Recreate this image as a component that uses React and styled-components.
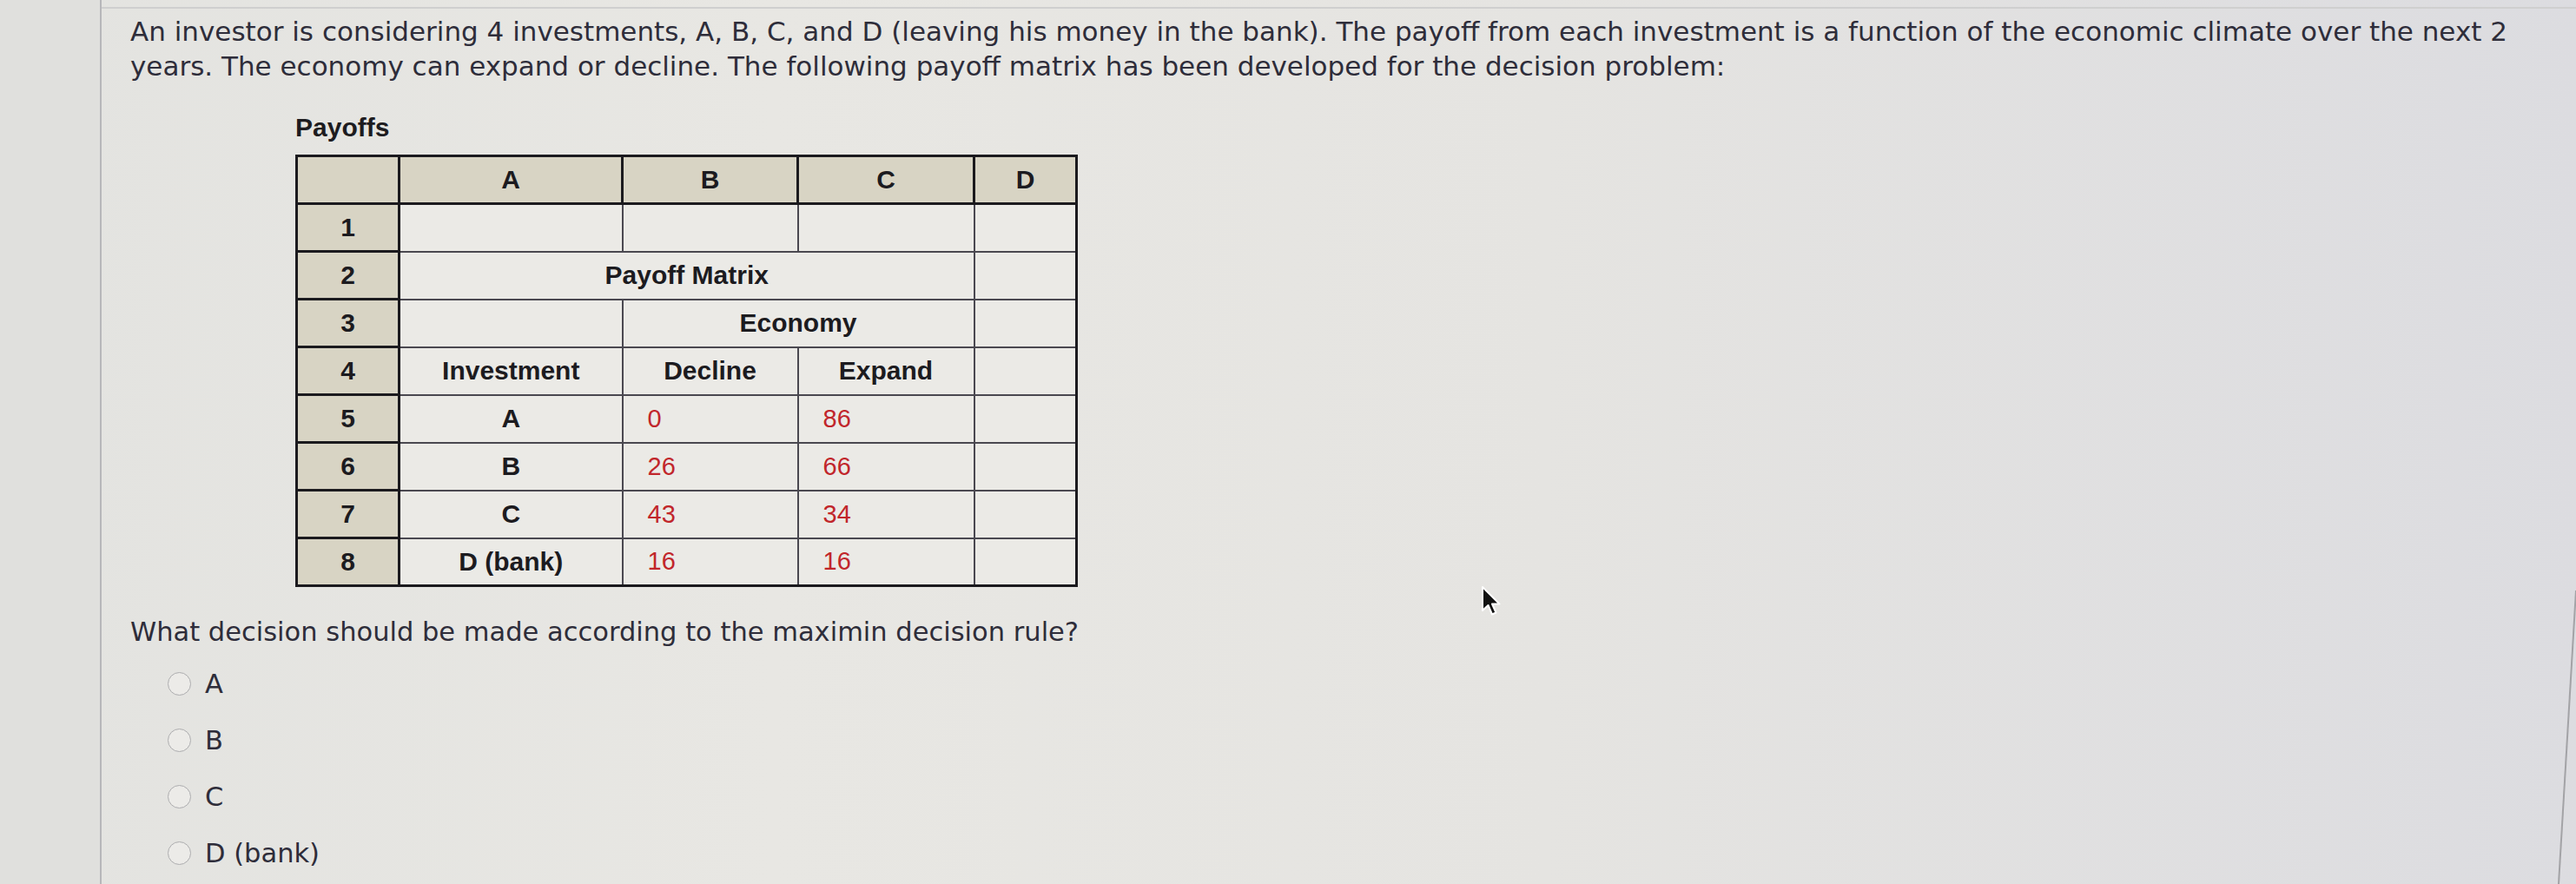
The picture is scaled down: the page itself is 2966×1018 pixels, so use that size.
import React from 'react';
import styled, { createGlobalStyle } from 'styled-components';

const GlobalStyle = createGlobalStyle`
  html, body {
    margin: 0;
    padding: 0;
  }

  body {
    background: #e4e3df;
    overflow: hidden;
  }
`;

const columns = ['A', 'B', 'C', 'D'];
const columnWidths = [118, 257, 202, 203, 118];

const payoffs = [
  { name: 'A', decline: 0, expand: 86 },
  { name: 'B', decline: 26, expand: 66 },
  { name: 'C', decline: 43, expand: 34 },
  { name: 'D (bank)', decline: 16, expand: 16 },
];

const choices = ['A', 'B', 'C', 'D (bank)'];

const Cursor = () => (
  <CursorMark width="26" height="38" viewBox="0 0 26 38">
    <path
      d="M2 2 L2 29 L8.5 23 L13 33.5 L17.5 31.5 L13 21.5 L21.5 21.5 Z"
      fill="#111"
      stroke="#fff"
      strokeWidth="2"
      strokeLinejoin="round"
    />
  </CursorMark>
);

const App = () => (
  <Screen>
    <GlobalStyle />
    <Sidebar />
    <Main>
      <Prompt>
        An investor is considering 4 investments, A, B, C, and D (leaving his
        money in the bank). The payoff from each investment is a function of
        the economic climate over the next 2 years. The economy can expand or
        decline. The following payoff matrix has been developed for the
        decision problem:
      </Prompt>

      <Exhibit>
        <ExhibitTitle>Payoffs</ExhibitTitle>
        <Sheet>
          <colgroup>
            {columnWidths.map((w, i) => (
              <col key={i} style={{ width: w }} />
            ))}
          </colgroup>
          <thead>
            <tr>
              <ColHead />
              {columns.map(c => (
                <ColHead key={c}>{c}</ColHead>
              ))}
            </tr>
          </thead>
          <tbody>
            <tr>
              <RowHead>1</RowHead>
              <Cell />
              <Cell />
              <Cell />
              <Cell />
            </tr>
            <tr>
              <RowHead>2</RowHead>
              <Cell colSpan={3} $bold>
                Payoff Matrix
              </Cell>
              <Cell />
            </tr>
            <tr>
              <RowHead>3</RowHead>
              <Cell />
              <Cell colSpan={2} $bold>
                Economy
              </Cell>
              <Cell />
            </tr>
            <tr>
              <RowHead>4</RowHead>
              <Cell $bold>Investment</Cell>
              <Cell $bold>Decline</Cell>
              <Cell $bold>Expand</Cell>
              <Cell />
            </tr>
            {payoffs.map((p, i) => (
              <tr key={p.name}>
                <RowHead>{i + 5}</RowHead>
                <Cell $bold>{p.name}</Cell>
                <Cell $value>{p.decline}</Cell>
                <Cell $value>{p.expand}</Cell>
                <Cell />
              </tr>
            ))}
          </tbody>
        </Sheet>
      </Exhibit>

      <Question>
        What decision should be made according to the maximin decision rule?
      </Question>
      <Choices>
        {choices.map(c => (
          <Choice key={c}>
            <Radio />
            <ChoiceLabel>{c}</ChoiceLabel>
          </Choice>
        ))}
      </Choices>
    </Main>
    <Cursor />
    <ScreenEdge width="40" height="1018" viewBox="0 0 40 1018">
      <line x1="40" y1="680" x2="20" y2="1018" stroke="#a3a3a6" strokeWidth="2" />
    </ScreenEdge>
  </Screen>
);

const Screen = styled.div`
  position: relative;
  display: flex;
  height: 1018px;
  overflow: hidden;
  background: linear-gradient(
    90deg,
    #e3e3e0 0%,
    #e8e7e3 30%,
    #e5e4e1 60%,
    #dcdce0 100%
  );
`;

const Sidebar = styled.aside`
  flex: 0 0 115px;
  border-right: 2px solid #b7b7ba;
  background: #e0e0dd;
`;

const Main = styled.main`
  flex: 1 1 auto;
  margin-top: 8px;
  border-top: 2px solid #cfcfcf;
  padding: 6px 0 0 33px;
  font-family: 'DejaVu Sans', Verdana, sans-serif;
  color: #2e2d3a;
`;

const Prompt = styled.p`
  margin: 0;
  max-width: 2805px;
  font-size: 31px;
  line-height: 40px;
`;

const Exhibit = styled.section`
  margin: 34px 0 0 190px;
`;

const ExhibitTitle = styled.div`
  font-family: 'Liberation Sans', Arial, sans-serif;
  font-weight: 700;
  font-size: 30px;
  line-height: 34px;
  color: #1d1c20;
  margin-bottom: 14px;
`;

const Sheet = styled.table`
  table-layout: fixed;
  width: 898px;
  border-collapse: collapse;
  border: 3px solid #1b1a1e;
  font-family: 'Liberation Sans', Arial, sans-serif;
  color: #1c1b1f;

  tr {
    height: 55px;
  }
`;

const ColHead = styled.th`
  background: #d8d4c4;
  border: 3px solid #1b1a1e;
  font-size: 30px;
  font-weight: 700;
  text-align: center;
  padding: 0;
`;

const RowHead = styled.th`
  background: #d8d4c4;
  border: 3px solid #1b1a1e;
  font-size: 30px;
  font-weight: 700;
  text-align: center;
  padding: 0;
`;

const Cell = styled.td`
  background: #ebeae6;
  border: 2px solid #4a4850;
  padding: ${p => (p.$value ? '0 0 0 28px' : '0')};
  text-align: ${p => (p.$value ? 'left' : 'center')};
  font-size: ${p => (p.$value ? '29px' : '30px')};
  font-weight: ${p => (p.$bold ? 700 : 400)};
  color: ${p => (p.$value ? '#c1262b' : '#1c1b1f')};
`;

const Question = styled.p`
  margin: 32px 0 0;
  font-size: 30.5px;
  line-height: 40px;
`;

const Choices = styled.div`
  margin-top: 7px;
  padding-left: 43px;
`;

const Choice = styled.label`
  display: flex;
  align-items: center;
  gap: 16px;
  height: 65px;
`;

const Radio = styled.span`
  width: 27px;
  height: 27px;
  box-sizing: border-box;
  border-radius: 50%;
  border: 1.5px solid #acacae;
  background: #ecebe8;
`;

const ChoiceLabel = styled.span`
  font-size: 30.5px;
  color: #2e2d3a;
`;

const CursorMark = styled.svg`
  position: absolute;
  left: 1705px;
  top: 674px;
`;

const ScreenEdge = styled.svg`
  position: absolute;
  right: 0;
  top: 0;
`;

export default App;
